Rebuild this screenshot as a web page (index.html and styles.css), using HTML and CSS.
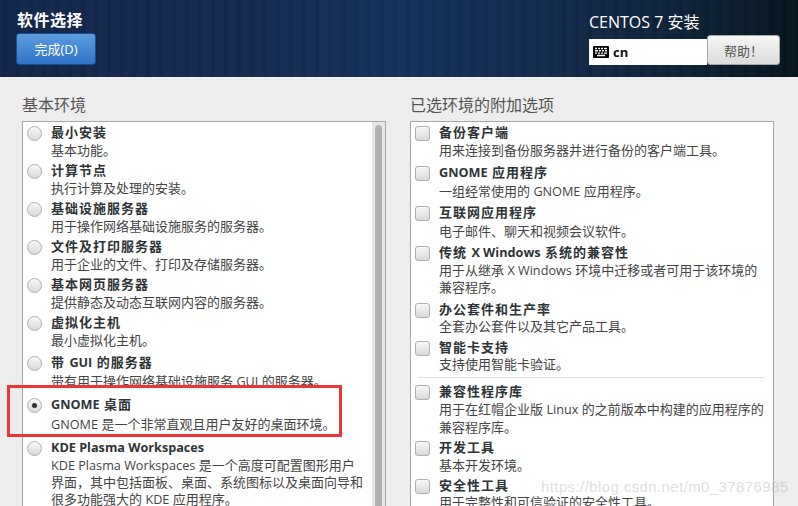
FILE: index.html
```html
<!DOCTYPE html>
<html lang="zh-CN">
<head>
<meta charset="utf-8">
<title>软件选择</title>
<link rel="stylesheet" href="styles.css">
</head>
<body>
<div class="page">
  <header class="top">
    <div class="top-left">
      <h1 class="spoke">软件选择</h1>
      <button class="done">完成(D)</button>
    </div>
    <div class="top-right">
      <div class="product">CENTOS 7 安装</div>
      <div class="tools">
        <div class="layout">
          <svg class="kbd" width="16" height="12" viewBox="0 0 16 12"><rect width="16" height="12" rx="1" fill="#000"/><path d="M2 2.500h2M5 2.500h2M8 2.500h2M11 2.500h3M2 4.800h3M6 4.800h2M9 4.800h2M12 4.800h2M2 7.100h2M5 7.100h2M8 7.100h2M11 7.100h3M4 9.500h8" stroke="#fff" stroke-width="1.400" fill="none"/></svg>
          <span class="code">cn</span>
        </div>
        <button class="help">帮助！</button>
      </div>
    </div>
  </header>
  <main class="content">
    <section class="col">
      <h2 class="col-title">基本环境</h2>
      <div class="box">
        <div class="list">
          <div class="row"><span class="radio"></span><div class="txt"><div class="name">最小安装</div><div class="desc">基本功能。</div></div></div>
          <div class="row"><span class="radio"></span><div class="txt"><div class="name">计算节点</div><div class="desc">执行计算及处理的安装。</div></div></div>
          <div class="row"><span class="radio"></span><div class="txt"><div class="name">基础设施服务器</div><div class="desc">用于操作网络基础设施服务的服务器。</div></div></div>
          <div class="row"><span class="radio"></span><div class="txt"><div class="name">文件及打印服务器</div><div class="desc">用于企业的文件、打印及存储服务器。</div></div></div>
          <div class="row"><span class="radio"></span><div class="txt"><div class="name">基本网页服务器</div><div class="desc">提供静态及动态互联网内容的服务器。</div></div></div>
          <div class="row"><span class="radio"></span><div class="txt"><div class="name">虚拟化主机</div><div class="desc">最小虚拟化主机。</div></div></div>
          <div class="row mt2 loose"><span class="radio"></span><div class="txt"><div class="name">带 <span class="en">GUI</span> 的服务器</div><div class="desc">带有用于操作网络基础设施服务 <span class="en">GUI</span> 的服务器。</div></div></div>
          <div class="row mt3 looser"><span class="radio on"></span><div class="txt"><div class="name"><span class="en">GNOME</span> 桌面</div><div class="desc"><span class="en">GNOME</span> 是一个非常直观且用户友好的桌面环境。</div></div></div>
          <div class="row mt3 loose tight-lines"><span class="radio"></span><div class="txt"><div class="name"><span class="en">KDE Plasma Workspaces</span></div><div class="desc"><span class="en">KDE Plasma Workspaces</span> 是一个高度可配置图形用户界面，其中包括面板、桌面、系统图标以及桌面向导和很多功能强大的 <span class="en">KDE</span> 应用程序。</div></div></div>
        </div>
        <div class="scroll"><div class="thumb"></div></div>
      </div>
    </section>
    <section class="col">
      <h2 class="col-title">已选环境的附加选项</h2>
      <div class="box">
        <div class="list">
          <div class="row"><span class="check"></span><div class="txt"><div class="name">备份客户端</div><div class="desc">用来连接到备份服务器并进行备份的客户端工具。</div></div></div>
          <div class="row mt2 loose"><span class="check"></span><div class="txt"><div class="name"><span class="en">GNOME</span> 应用程序</div><div class="desc">一组经常使用的 <span class="en">GNOME</span> 应用程序。</div></div></div>
          <div class="row mt1 loose"><span class="check"></span><div class="txt"><div class="name">互联网应用程序</div><div class="desc">电子邮件、聊天和视频会议软件。</div></div></div>
          <div class="row mt1 loose tight-lines"><span class="check"></span><div class="txt"><div class="name">传统 <span class="en">X Windows</span> 系统的兼容性</div><div class="desc">用于从继承 <span class="en">X Windows</span> 环境中迁移或者可用于该环境的兼容程序。</div></div></div>
          <div class="row mt2 close"><span class="check"></span><div class="txt"><div class="name">办公套件和生产率</div><div class="desc">全套办公套件以及其它产品工具。</div></div></div>
          <div class="row mt1 close"><span class="check"></span><div class="txt"><div class="name">智能卡支持</div><div class="desc">支持使用智能卡验证。</div></div></div>
          <hr class="sep">
          <div class="row"><span class="check"></span><div class="txt"><div class="name">兼容性程序库</div><div class="desc">用于在红帽企业版 <span class="en">Linux</span> 的之前版本中构建的应用程序的兼容程序库。</div></div></div>
          <div class="row"><span class="check"></span><div class="txt"><div class="name">开发工具</div><div class="desc">基本开发环境。</div></div></div>
          <div class="row close"><span class="check"></span><div class="txt"><div class="name">安全性工具</div><div class="desc">用于完整性和可信验证的安全性工具。</div></div></div>
        </div>
      </div>
    </section>
  </main>
  <div class="mark"></div>
  <div class="watermark">https://blog.csdn.net/m0_37876985</div>
</div>
</body>
</html>
```

FILE: styles.css
```css
* { box-sizing: border-box; }
html, body { margin: 0; height: 100%; overflow: hidden; }
body {
  font-family: "Open Sans", "Noto Sans CJK SC", sans-serif;
  background: #ededed;
  color: #2e3436;
}
.page { position: relative; width: 798px; height: 506px; overflow: hidden; }

.top {
  height: 77px;
  display: flex;
  justify-content: space-between;
  padding: 11px 18px 0 16px;
  color: #fff;
  background:
    repeating-linear-gradient(90deg, rgba(255,255,255,.012) 0 3px, rgba(0,0,0,.03) 3px 7px, rgba(255,255,255,.015) 7px 13px),
    linear-gradient(90deg, #12264a 0%, #15294e 30%, #15305a 50%, #122a4c 68%, #0d2238 85%, #06141c 100%);
}
.spoke {
  margin: 0 0 3px 1px;
  font-size: 16px;
  line-height: 19px;
  font-weight: 700;
  letter-spacing: .5px;
}
.done {
  display: block;
  width: 80px;
  height: 32px;
  padding: 0;
  border: 1px solid #1d4f8f;
  border-radius: 3px;
  background: linear-gradient(#5c9bdf, #2f74c9);
  color: #fff;
  font: 13px/1 "Open Sans", "Noto Sans CJK SC", sans-serif;
}
.top-right { width: 191px; padding-top: 1px; }
.product { font-size: 16px; line-height: 20px; }
.tools { display: flex; margin-top: 3px; }
.layout {
  width: 118px;
  height: 26px;
  margin-top: 4px;
  display: flex;
  align-items: center;
  gap: 4px;
  padding-left: 4px;
  background: #fff;
  color: #111;
}
.kbd { display: block; }
.code { font-size: 13px; font-weight: 700; }
.help {
  width: 73px;
  height: 30px;
  padding: 0;
  border: 1px solid #a4a9ab;
  border-radius: 3px;
  background: linear-gradient(#f6f6f5, #dcdcda);
  color: #555;
  font: 13px/1 "Noto Sans CJK TC", sans-serif;
}

.content { display: flex; gap: 24px; padding: 19px 0 0 22px; }
.col { width: 364px; }
.col-title {
  margin: 0 0 6px;
  font-size: 16px;
  line-height: 19px;
  font-weight: 400;
  color: #555;
}
.box {
  height: 400px;
  display: flex;
  border: 1px solid #a8a8a8;
  background: #fff;
  overflow: hidden;
}
.list { flex: 1; min-width: 0; display: flex; flex-direction: column; padding: 1px 6px 0 4px; }
.row { flex: none; display: flex; margin-bottom: 2px; }
.mt1 { margin-top: 1px; }
.mt2 { margin-top: 2px; }
.mt3 { margin-top: 3px; }
.radio, .check {
  flex: none;
  width: 15px;
  height: 15px;
  margin: 3px 9px 0 0;
  border: 1px solid #b0b0ae;
  background: linear-gradient(#f8f8f7, #d9d9d7);
}
.radio { position: relative; border-radius: 50%; }
.check { border-radius: 3px; }
.radio.on::after {
  content: "";
  position: absolute;
  left: 4px;
  top: 4px;
  width: 5px;
  height: 5px;
  border-radius: 50%;
  background: #2e3436;
}
.txt { flex: 1; min-width: 0; }
.name { font-size: 13px; line-height: 18px; font-weight: 700; letter-spacing: 1px; color: #2e3436; }
.en { font-size: 12.670px; letter-spacing: 0; }
.desc { font-size: 13px; line-height: 18px; color: #444; }
.loose .desc { margin-top: 1px; }
.looser .desc { margin-top: 2px; }
.close .desc { margin-top: -1px; }
.tight-lines .desc { line-height: 17px; }
.sep { flex: none; height: 1px; margin: 2px 3px 4px 3px; border: 0; background: #e0e0e0; }

.scroll { flex: none; width: 13px; padding: 3px 3px 0 3px; background: #e8e8e8; }
.thumb { height: 100%; border-radius: 4px; background: #b0b0b0; }

.mark {
  position: absolute;
  left: 7px;
  top: 385px;
  width: 335px;
  height: 52px;
  border: 3px solid #ee3535;
}
.watermark {
  position: absolute;
  left: 541px;
  top: 477px;
  font: 15px/20px "Liberation Sans", sans-serif;
  letter-spacing: .4px;
  color: rgba(170,170,170,.4);
}
```
